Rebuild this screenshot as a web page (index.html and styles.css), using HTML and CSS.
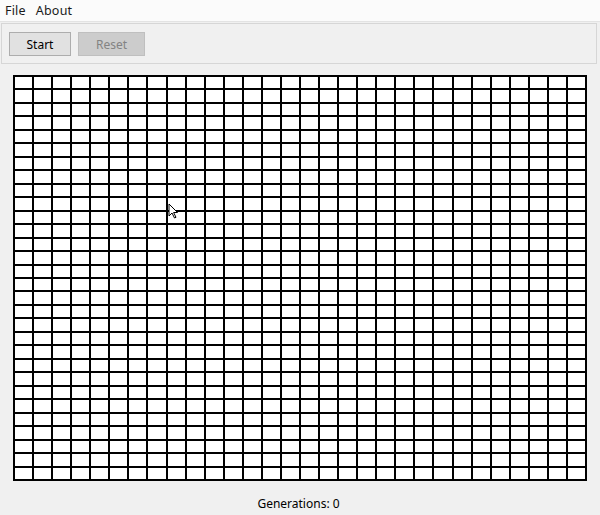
FILE: index.html
```html
<!DOCTYPE html>
<html>
<head>
<meta charset="utf-8">
<link rel="stylesheet" href="styles.css">
</head>
<body>
<div class="window">
  <div class="menubar">
    <span class="menu-item">File</span>
    <span class="menu-item">About</span>
  </div>
  <div class="toolbar">
    <button class="btn">Start</button>
    <button class="btn btn-disabled">Reset</button>
  </div>
  <div class="board-wrap">
    <div class="board" id="board"></div>
    <svg class="cursor" width="12" height="18" viewBox="0 0 12 18">
      <path d="M1 1 L1 13 L4 10 L6.5 15 L8 14.3 L5.6 9.5 L9.5 9.5 Z" fill="#fff" stroke="#000" stroke-width="1"/>
    </svg>
  </div>
  <div class="status">Generations: 0</div>
</div>
<script>
  var b = document.getElementById('board');
  var html = '';
  for (var i = 0; i < 900; i++) html += '<div class="cell"></div>';
  b.innerHTML = html;
</script>
</body>
</html>
```
FILE: styles.css
```css
html, body {
  margin: 0;
  padding: 0;
  background: #f0f0f0;
}
.window {
  width: 600px;
  height: 515px;
  display: flex;
  flex-direction: column;
  font-family: "Noto Sans", "Open Sans", sans-serif;
  color: #000;
  overflow: hidden;
}
.menubar {
  height: 22px;
  background: #fbfbfb;
  display: flex;
  align-items: center;
  gap: 10px;
  padding-left: 5px;
  font-size: 12.5px;
  border-bottom: 1px solid #e3e3e3;
  box-sizing: border-box;
  color: #1a1a1a;
}
.menu-item {
  line-height: 22px;
  letter-spacing: 0.2px;
}
.toolbar {
  margin: 1px 3px 0 1px;
  height: 41px;
  box-sizing: border-box;
  border: 1px solid #d6d6d6;
  display: flex;
  align-items: center;
  gap: 7px;
  padding-left: 7px;
  padding-top: 1px;
}
.btn {
  width: 62px;
  height: 24px;
  background: #e1e1e1;
  border: 1px solid #adadad;
  font-family: "Noto Sans", "Open Sans", sans-serif;
  font-size: 12px;
  color: #000;
  padding: 0;
  margin: 0;
}
.btn-disabled {
  width: 67px;
  background: #cccccc;
  border-color: #bfbfbf;
  color: #838383;
}
.board-wrap {
  position: relative;
  padding: 11px 0 0 13px;
}
.board {
  width: 574px;
  height: 406px;
  box-sizing: border-box;
  background: #000;
  padding: 2px;
  display: grid;
  grid-template-columns: repeat(30, 1fr);
  grid-template-rows: repeat(30, 1fr);
  gap: 2px;
}
.cell {
  background: #fff;
}
.cursor {
  position: absolute;
  left: 168px;
  top: 139px;
}
.status {
  text-align: center;
  font-size: 12px;
  margin-top: 14px;
  padding-right: 3px;
}
```
